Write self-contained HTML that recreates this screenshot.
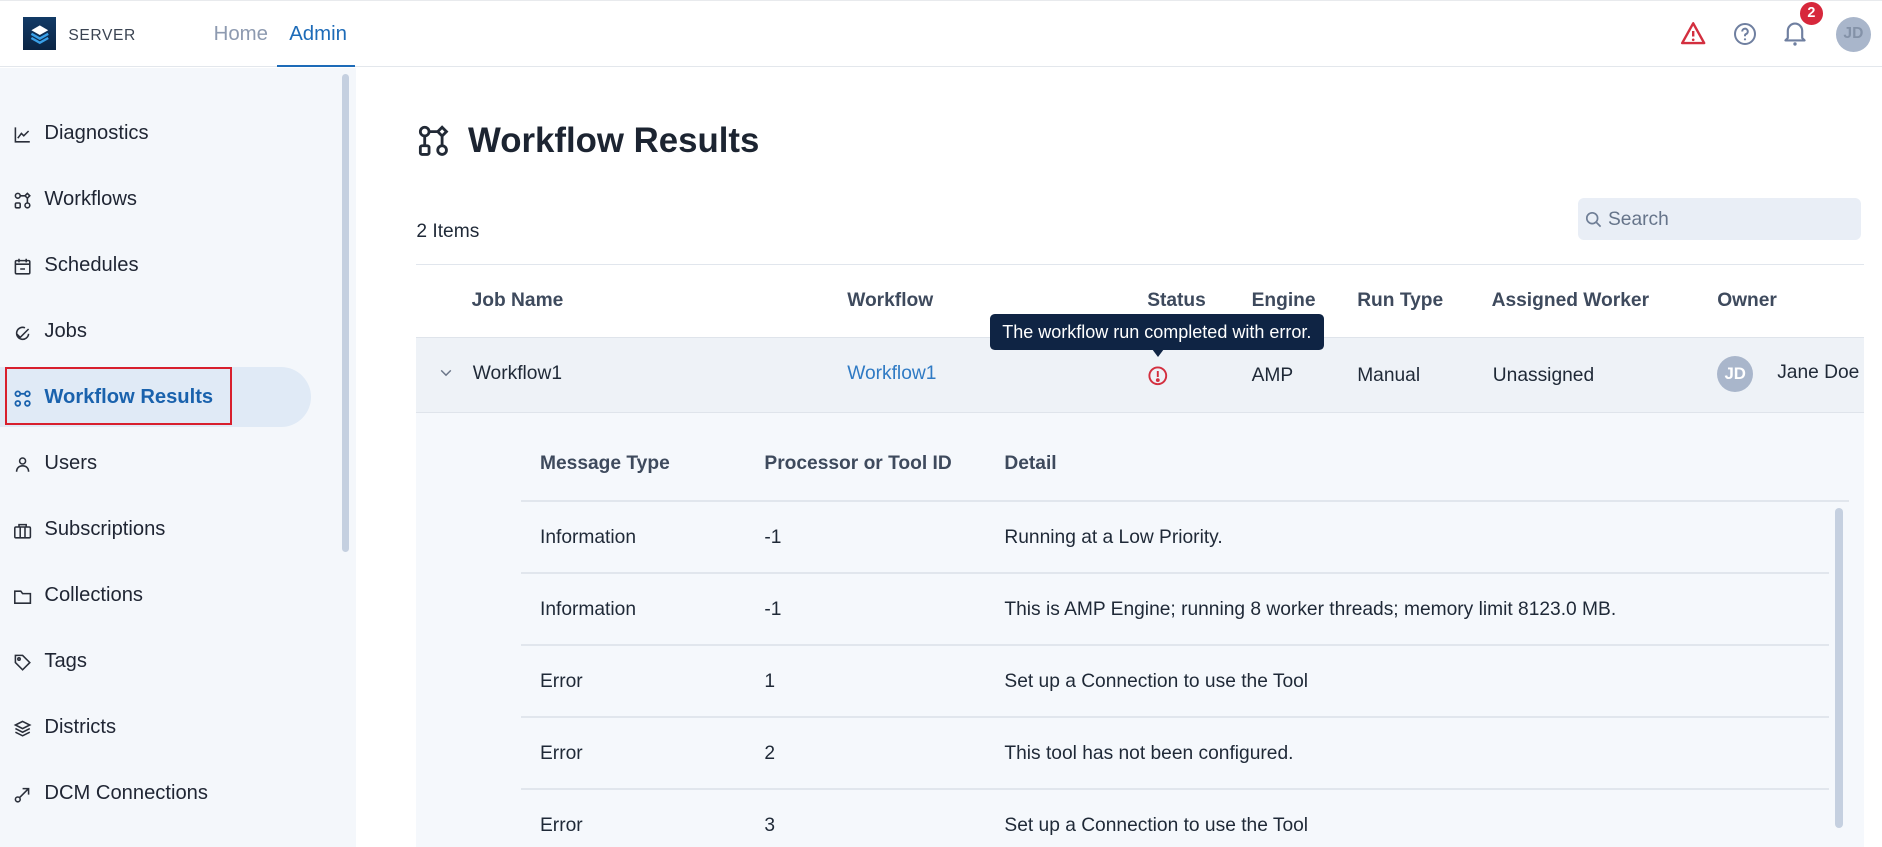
<!DOCTYPE html>
<html><head><meta charset="utf-8">
<style>
*{box-sizing:border-box;margin:0;padding:0}
html,body{width:1882px;height:847px;overflow:hidden;background:#fff}
#w{zoom:1.2;position:relative;width:1568px;height:706px;font-family:"Liberation Sans",Arial,sans-serif;color:#1f2937;overflow:hidden}
.a{position:absolute;white-space:nowrap}
.t{line-height:20px;font-size:16px;margin-top:1px}
.nav{position:absolute;left:0;width:280px;height:20px;line-height:20px;font-size:16.8px;color:#1f2533;margin-top:1px}
.nav svg{position:absolute;left:11px;top:3px}
.nav span{position:absolute;left:37px}
.th{font-weight:bold;color:#3e4a5d;font-size:16px;line-height:20px;margin-top:1px}
.hl{position:absolute;height:1px;background:#e1e6ed}
</style></head><body><div id="w">
<!-- header -->
<div class="a" style="left:0;top:0;width:1568px;height:56px;border-bottom:1px solid #e3e7ec;border-top:1px solid #e8eaed"></div>
<div class="a" style="left:19px;top:14px;width:28px;height:28px;background:linear-gradient(#123a66,#0b2545)">
<svg width="28" height="28" viewBox="0 0 28 28"><path d="M14 7l7 4-7 4-7-4z" fill="#fff"/><path d="M7 14l7 4 7-4M7 17.5l7 4 7-4" fill="none" stroke="#3aa0e8" stroke-width="2"/></svg></div>
<div class="a" style="left:57px;top:22px;font-size:13px;line-height:16px;color:#3b4452;letter-spacing:.5px">SERVER</div>
<div class="a" style="left:178px;top:18px;font-size:17px;line-height:20px;color:#8d9ab0">Home</div>
<div class="a" style="left:241px;top:18px;font-size:17px;line-height:20px;color:#1d6bb8">Admin</div>
<div class="a" style="left:231px;top:54px;width:65px;height:2px;background:#1d6bb8"></div>
<svg class="a" style="left:1400px;top:17px" width="22" height="22" viewBox="0 0 24 24"><path d="M12 3L2 21h20z" fill="none" stroke="#d32f3f" stroke-width="2.2" stroke-linejoin="round"/><path d="M12 10v5" stroke="#d32f3f" stroke-width="2.2"/><circle cx="12" cy="18" r="1.2" fill="#d32f3f"/></svg>
<svg class="a" style="left:1444px;top:18px" width="20" height="20" viewBox="0 0 24 24"><circle cx="12" cy="12" r="10" fill="none" stroke="#6f7fa0" stroke-width="2"/><path d="M9.2 9.5a2.8 2.8 0 1 1 3.8 2.6c-.7.3-1 .8-1 1.5v.6" fill="none" stroke="#6f7fa0" stroke-width="2"/><circle cx="12" cy="17.3" r="1.1" fill="#6f7fa0"/></svg>
<svg class="a" style="left:1486px;top:17px" width="20" height="22" viewBox="0 0 20 22"><path d="M4 15V9a6 6 0 0 1 12 0v6l2 2H2z" fill="none" stroke="#6f7fa0" stroke-width="1.8" stroke-linejoin="round"/><circle cx="10" cy="20" r="1.4" fill="#6f7fa0"/></svg>
<div class="a" style="left:1500px;top:2px;width:19px;height:19px;border-radius:50%;background:#d7283c;color:#fff;font-size:12px;font-weight:bold;line-height:19px;text-align:center">2</div>
<div class="a" style="left:1530px;top:14px;width:29px;height:29px;border-radius:50%;background:#a9b6cb;color:#8492a8;font-size:13px;font-weight:bold;line-height:29px;text-align:center">JD</div>
<!-- sidebar -->
<div class="a" style="left:0;top:57px;width:297px;height:649px;background:#f4f7fb"></div>
<div class="a" style="left:285px;top:62px;width:6px;height:398px;border-radius:3px;background:#c5d0e0"></div>
<div class="a" style="left:0;top:306px;width:259px;height:50px;border-radius:0 25px 25px 0;background:#e0eaf6"></div>
<div class="a" style="left:4px;top:306px;width:189px;height:48px;border:2px solid #d81f2d"></div>
<div class="nav" style="top:100px"><svg width="16" height="16" viewBox="0 0 16 16" fill="none" stroke="#2a2f3a" stroke-width="1.3"><path d="M2 2v12h12M4 11l3-4 2 2 4-4"/></svg><span>Diagnostics</span></div>
<div class="nav" style="top:155px"><svg width="16" height="16" viewBox="0 0 16 16" fill="none" stroke="#2a2f3a" stroke-width="1.3"><circle cx="4" cy="4" r="2"/><path d="M12 2l2 2-2 2-2-2z"/><rect x="2" y="10" width="4" height="4" rx="1"/><circle cx="12" cy="12" r="2"/><path d="M6 4h4M12 6v4"/></svg><span>Workflows</span></div>
<div class="nav" style="top:210px"><svg width="16" height="16" viewBox="0 0 16 16" fill="none" stroke="#2a2f3a" stroke-width="1.3"><rect x="2" y="3" width="12" height="11" rx="1"/><path d="M2 6h12M5 1.5v3M11 1.5v3M6 10h4"/></svg><span>Schedules</span></div>
<div class="nav" style="top:265px"><svg width="16" height="16" viewBox="0 0 16 16" fill="none" stroke="#2a2f3a" stroke-width="1.3"><path d="M3 9l3 3 7-7M13 9a5 5 0 1 1-3-5"/></svg><span>Jobs</span></div>
<div class="nav" style="top:320px;font-weight:bold;color:#1a62ad"><svg width="16" height="16" viewBox="0 0 16 16" fill="none" stroke="#1a62ad" stroke-width="1.5"><circle cx="4" cy="4" r="2"/><circle cx="12" cy="4" r="2"/><circle cx="4" cy="12" r="2"/><circle cx="12" cy="12" r="2"/><path d="M6 4h4"/></svg><span>Workflow Results</span></div>
<div class="nav" style="top:375px"><svg width="16" height="16" viewBox="0 0 16 16" fill="none" stroke="#2a2f3a" stroke-width="1.3"><circle cx="8" cy="5" r="2.5"/><path d="M3 14c0-3 2-5 5-5s5 2 5 5"/></svg><span>Users</span></div>
<div class="nav" style="top:430px"><svg width="16" height="16" viewBox="0 0 16 16" fill="none" stroke="#2a2f3a" stroke-width="1.3"><rect x="1.5" y="5" width="13" height="9" rx="1"/><path d="M5 5V3h6v2M6 5v9M10 5v9"/></svg><span>Subscriptions</span></div>
<div class="nav" style="top:485px"><svg width="16" height="16" viewBox="0 0 16 16" fill="none" stroke="#2a2f3a" stroke-width="1.3"><path d="M1.5 3.5h5l1.5 2h6.5v8h-13z"/></svg><span>Collections</span></div>
<div class="nav" style="top:540px"><svg width="16" height="16" viewBox="0 0 16 16" fill="none" stroke="#2a2f3a" stroke-width="1.3"><path d="M2 2h6l6 6-6 6-6-6z"/><circle cx="5" cy="5" r="1"/></svg><span>Tags</span></div>
<div class="nav" style="top:595px"><svg width="16" height="16" viewBox="0 0 16 16" fill="none" stroke="#2a2f3a" stroke-width="1.3"><path d="M8 2l6 3-6 3-6-3zM2 8l6 3 6-3M2 11l6 3 6-3"/></svg><span>Districts</span></div>
<div class="nav" style="top:650px"><svg width="16" height="16" viewBox="0 0 16 16" fill="none" stroke="#2a2f3a" stroke-width="1.3"><circle cx="4" cy="12" r="2"/><path d="M5.5 10.5L13 3M8 3h5v5"/></svg><span>DCM Connections</span></div>
<!-- main -->
<svg class="a" style="left:347px;top:103px" width="29" height="29" viewBox="0 0 16 16" fill="none" stroke="#222a36" stroke-width="1.3"><circle cx="4" cy="3.5" r="2"/><path d="M12 1.5l2 2-2 2-2-2z"/><rect x="2" y="10" width="4" height="4" rx=".8"/><circle cx="12" cy="12" r="2"/><path d="M6 3.5h4M12 5.5v4.5M4 5.5v4.5"/></svg>
<div class="a" style="left:390px;top:101px;font-size:29px;line-height:34px;font-weight:bold;color:#1c2431">Workflow Results</div>
<div class="a t" style="left:347px;top:182px">2 Items</div>
<div class="a" style="left:1315px;top:165px;width:236px;height:35px;border-radius:5px;background:#e9eef6"></div>
<svg class="a" style="left:1321px;top:176px" width="14" height="14" viewBox="0 0 14 14" fill="none" stroke="#6f7e96" stroke-width="1.4"><circle cx="6" cy="6" r="4.5"/><path d="M9.5 9.5L13 13"/></svg>
<div class="a" style="left:1340px;top:173px;font-size:16px;line-height:20px;color:#66748a">Search</div>
<div class="hl" style="left:347px;top:220px;width:1206px"></div>
<div class="a th" style="left:393px;top:240px">Job Name</div>
<div class="a th" style="left:706px;top:240px">Workflow</div>
<div class="a th" style="left:956px;top:240px">Status</div>
<div class="a th" style="left:1043px;top:240px">Engine</div>
<div class="a th" style="left:1131px;top:240px">Run Type</div>
<div class="a th" style="left:1243px;top:240px">Assigned Worker</div>
<div class="a th" style="left:1431px;top:240px">Owner</div>
<div class="a" style="left:347px;top:281px;width:1206px;height:63px;background:#eef2f7;border-top:1px solid #dfe4eb;border-bottom:1px solid #dfe4eb"></div>
<svg class="a" style="left:367px;top:307px" width="10" height="8" viewBox="0 0 10 8" fill="none" stroke="#6b7689" stroke-width="1.2"><path d="M1 2l4 4 4-4"/></svg>
<div class="a t" style="left:394px;top:301px">Workflow1</div>
<div class="a t" style="left:706px;top:301px;color:#2f7ac4">Workflow1</div>
<svg class="a" style="left:956px;top:304px" width="18" height="18" viewBox="0 0 18 18" fill="none" stroke="#d32f3f" stroke-width="1.6"><circle cx="9" cy="9" r="7"/><path d="M9 5v5"/><circle cx="9" cy="12.6" r=".8" fill="#d32f3f"/></svg>
<div class="a t" style="left:1043px;top:302px">AMP</div>
<div class="a t" style="left:1131px;top:302px">Manual</div>
<div class="a t" style="left:1244px;top:302px">Unassigned</div>
<div class="a" style="left:1431px;top:297px;width:30px;height:30px;border-radius:50%;background:#a9b6cb;color:#fff;font-size:14px;font-weight:bold;line-height:30px;text-align:center">JD</div>
<div class="a t" style="left:1481px;top:300px">Jane Doe</div>
<div class="a" style="left:825px;top:262px;width:278px;height:30px;border-radius:4px;background:#0f2444;color:#fff;font-size:15px;line-height:30px;text-align:center">The workflow run completed with error.</div>
<div class="a" style="left:960px;top:291px;width:0;height:0;border-left:5px solid transparent;border-right:5px solid transparent;border-top:7px solid #0f2444"></div>
<!-- expanded -->
<div class="a" style="left:347px;top:344px;width:1206px;height:362px;background:#f5f8fc"></div>
<div class="a th" style="left:450px;top:376px">Message Type</div>
<div class="a th" style="left:637px;top:376px">Processor or Tool ID</div>
<div class="a th" style="left:837px;top:376px">Detail</div>
<div class="hl" style="left:434px;top:417px;width:1107px"></div>
<div class="hl" style="left:434px;top:477px;width:1090px"></div>
<div class="hl" style="left:434px;top:537px;width:1090px"></div>
<div class="hl" style="left:434px;top:597px;width:1090px"></div>
<div class="hl" style="left:434px;top:657px;width:1090px"></div>
<div class="a" style="left:1529px;top:423px;width:7px;height:267px;border-radius:4px;background:#c5d0e0"></div>
<div class="a t" style="left:450px;top:437px">Information</div><div class="a t" style="left:637px;top:437px">-1</div><div class="a t" style="left:837px;top:437px">Running at a Low Priority.</div>
<div class="a t" style="left:450px;top:497px">Information</div><div class="a t" style="left:637px;top:497px">-1</div><div class="a t" style="left:837px;top:497px">This is AMP Engine; running 8 worker threads; memory limit 8123.0 MB.</div>
<div class="a t" style="left:450px;top:557px">Error</div><div class="a t" style="left:637px;top:557px">1</div><div class="a t" style="left:837px;top:557px">Set up a Connection to use the Tool</div>
<div class="a t" style="left:450px;top:617px">Error</div><div class="a t" style="left:637px;top:617px">2</div><div class="a t" style="left:837px;top:617px">This tool has not been configured.</div>
<div class="a t" style="left:450px;top:677px">Error</div><div class="a t" style="left:637px;top:677px">3</div><div class="a t" style="left:837px;top:677px">Set up a Connection to use the Tool</div>
</div></body></html>
